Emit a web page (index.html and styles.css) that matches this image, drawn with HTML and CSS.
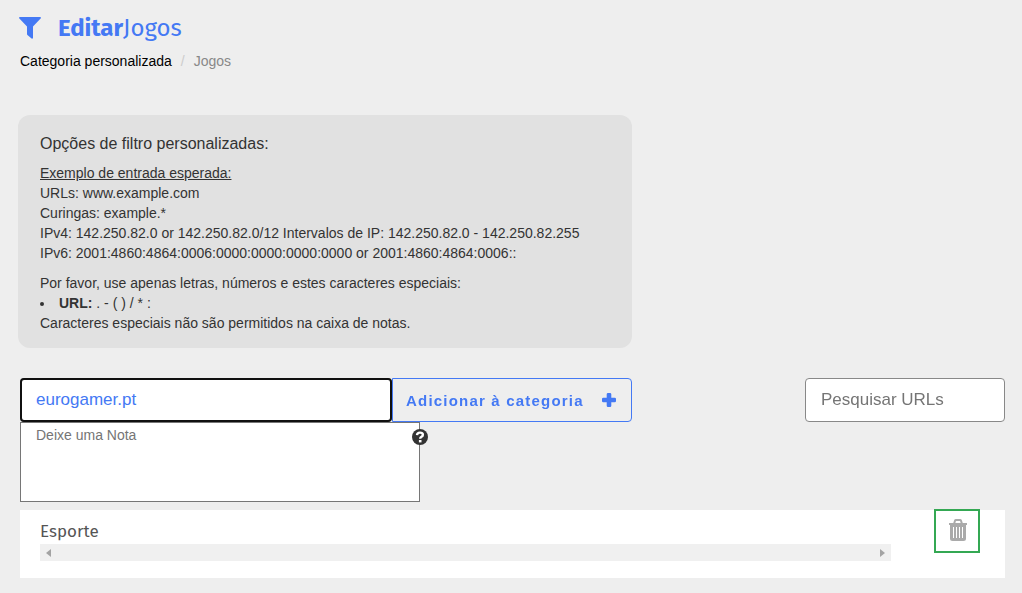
FILE: index.html
```html
<!DOCTYPE html>
<html lang="pt">
    <head>
        <meta charset="UTF-8">
        <title>Editar Jogos</title>
        <meta name="viewport" content="width=device-width, initial-scale=1.0">
        <link rel="stylesheet" href="styles.css">
    </head>
    <body>
        <header class="page-header">
            <h1 class="page-title">
                <svg class="filter-icon" viewBox="0 0 22 22" aria-hidden="true">
                    <path d="M0.6 0H21.4Q22.4 0.8 21.6 1.6L14 9.6V21Q13.6 22 12.6 21.6L8.4 18Q8 17.6 8 17V9.6L0.4 1.6Q-0.4 0.8 0.6 0Z"/>
                </svg>
                <span><strong>Editar</strong>Jogos</span>
            </h1>
            <nav class="breadcrumb">
                <a href="#">Categoria personalizada</a>
                <span class="separator">/</span>
                <span>Jogos</span>
            </nav>
        </header>

        <main>
            <section class="info-box">
                <h2>Opções de filtro personalizadas:</h2>
                <p>
                    <u>Exemplo de entrada esperada:</u><br>
                    URLs: www.example.com<br>
                    Curingas: example.*<br>
                    IPv4: 142.250.82.0 or 142.250.82.0/12 Intervalos de IP: 142.250.82.0 - 142.250.82.255<br>
                    IPv6: 2001:4860:4864:0006:0000:0000:0000:0000 or 2001:4860:4864:0006::
                </p>
                <p>Por favor, use apenas letras, números e estes caracteres especiais:</p>
                <ul>
                    <li><strong>URL:</strong> . - ( ) / * :</li>
                </ul>
                <p>Caracteres especiais não são permitidos na caixa de notas.</p>
            </section>

            <form class="toolbar">
                <div class="add-row">
                    <input class="url-input" id="urlInput" type="text" value="eurogamer.pt" aria-label="URL" autocomplete="off" spellcheck="false" autofocus>
                    <button class="add-btn" type="button">
                        Adicionar à categoria
                        <svg class="plus-icon" viewBox="0 0 14 14" aria-hidden="true">
                            <path d="M6 0H8Q9.3 0 9.3 1.3V4.7H12.7Q14 4.7 14 6V8Q14 9.3 12.7 9.3H9.3V12.7Q9.3 14 8 14H6Q4.7 14 4.7 12.7V9.3H1.3Q0 9.3 0 8V6Q0 4.7 1.3 4.7H4.7V1.3Q4.7 0 6 0Z"/>
                        </svg>
                    </button>
                </div>
                <input class="search-input" type="search" placeholder="Pesquisar URLs" aria-label="Pesquisar URLs">
            </form>

            <div class="note">
                <textarea class="note-input" placeholder="Deixe uma Nota" aria-label="Nota"></textarea>
                <svg class="help-icon" viewBox="0 0 16 16" role="img" aria-label="Ajuda">
                    <circle cx="8" cy="8" r="8" fill="#333"/>
                    <path d="M5 6.2Q5.2 3.6 8 3.6Q10.9 3.6 10.9 5.8Q10.9 7.2 9.3 7.9Q8.2 8.4 8.2 9.8" fill="none" stroke="#fff" stroke-width="2.4"/>
                    <rect x="6.900" y="11" width="2.600" height="2.400" fill="#fff"/>
                </svg>
            </div>

            <section class="entry">
                <div class="entry-body">
                    <h3>Esporte</h3>
                    <div class="scroll-track">
                        <svg viewBox="0 0 5 8" aria-hidden="true"><path d="M5 0V8L0 4Z"/></svg>
                        <svg viewBox="0 0 5 8" aria-hidden="true"><path d="M0 0V8L5 4Z"/></svg>
                    </div>
                </div>
                <button class="delete-btn" type="button" aria-label="Remover">
                    <svg class="trash-icon" viewBox="0 0 20 22" aria-hidden="true">
                        <path d="M6 5L7 1.700Q7.200 1 8 1H12Q12.800 1 13 1.700L14 5" fill="none" stroke="#aaa" stroke-width="2"/>
                        <path d="M1 4H19V6H18V19.500Q18 22 15.500 22H4.500Q2 22 2 19.500V6H1Z" fill="#aaa"/>
                        <path d="M5.500 8V19M8.500 8V19M11.500 8V19M14.500 8V19" stroke="#fff" stroke-width="1"/>
                    </svg>
                </button>
            </section>
        </main>

        <script>
            // keep the cursor after the typed address
            const urlInput = document.getElementById('urlInput');
            urlInput.focus();
            urlInput.setSelectionRange(urlInput.value.length, urlInput.value.length);
        </script>
    </body>
</html>
```
FILE: styles.css
```css
* {
    box-sizing: border-box;
}
body {
    margin: 0;
    padding: 12px 17px 15px 19px;
    background-color: #eee;
    color: #333;
    font-family: Arial, "Liberation Sans", sans-serif;
    font-size: 14px;
    line-height: 20px;
}
h1, h2, h3, p, ul {
    margin: 0;
    padding: 0;
    font-weight: 400;
}
input, textarea, button {
    margin: 0;
    font-family: inherit;
}
main {
    padding-left: 1px;
}
.page-header {
    margin-bottom: 44px;
}
.page-title {
    display: flex;
    align-items: center;
    gap: 17px;
    height: 31px;
    margin-bottom: 8px;
    color: #4479f4;
    font-family: "Fira Sans", "Noto Sans", sans-serif;
    font-size: 24px;
    line-height: 30px;
}
.filter-icon {
    width: 22px;
    height: 22px;
    fill: #4479f4;
}
.breadcrumb {
    display: flex;
    gap: 9px;
    padding-left: 1px;
    color: #888;
}
.breadcrumb a {
    color: #000;
    text-decoration: none;
}
.separator {
    color: #ccc;
}
.info-box {
    max-width: 614px;
    margin: 0 0 30px -2px;
    padding: 19px 22px 15px;
    border-radius: 12px;
    background-color: #e1e1e1;
}
.info-box h2 {
    margin-bottom: 9px;
    font-size: 16px;
    line-height: 20px;
}
.info-box h2 + p {
    margin-bottom: 10px;
}
.info-box ul {
    list-style-position: inside;
}
.toolbar {
    display: flex;
    justify-content: space-between;
    gap: 20px;
}
.add-row {
    display: flex;
    flex: 0 1 612px;
}
.url-input, .search-input {
    height: 44px;
    padding: 0 15px;
    border: 1px solid #888;
    border-radius: 4px;
    background-color: #fff;
    font-size: 17px;
}
.url-input {
    flex: 1;
    min-width: 0;
    color: #4479f4;
}
.url-input:focus {
    outline: 2px solid #101010;
    outline-offset: -2px;
}
.add-btn {
    display: flex;
    align-items: center;
    justify-content: space-between;
    width: 240px;
    height: 44px;
    padding: 0 15px 0 13px;
    border: 1px solid #4479f4;
    border-radius: 0 4px 4px 0;
    background-color: transparent;
    color: #4479f4;
    font-size: 15px;
    font-weight: bold;
    letter-spacing: 0.08em;
    white-space: nowrap;
    cursor: pointer;
}
.plus-icon {
    width: 14px;
    height: 14px;
    fill: #4479f4;
}
.search-input {
    width: 200px;
    appearance: none;
}
.search-input::placeholder, .note-input::placeholder {
    color: #757575;
}
.note {
    position: relative;
    max-width: 400px;
    margin-bottom: 8px;
}
.note-input {
    display: block;
    width: 100%;
    height: 80px;
    padding: 4px 15px;
    border: 1px solid #767676;
    border-radius: 0;
    background-color: #fff;
    font-size: 14px;
    line-height: 16px;
    resize: none;
}
.help-icon {
    position: absolute;
    top: 7px;
    right: -8px;
    width: 16px;
    height: 16px;
}
.entry {
    display: flex;
    align-items: flex-start;
    gap: 45px;
    padding: 1px 27px 17px 20px;
    background-color: #fff;
}
.entry-body {
    flex: 1;
    padding-top: 10px;
}
.entry h3 {
    margin-bottom: 1px;
    color: #555;
    font-family: "Fira Sans", "Noto Sans", sans-serif;
    font-size: 17px;
    line-height: 22px;
}
.scroll-track {
    display: flex;
    align-items: center;
    justify-content: space-between;
    height: 17px;
    padding: 0 6px;
    background-color: #f0f0f0;
}
.scroll-track svg {
    width: 5px;
    height: 8px;
    fill: #a3a3a3;
}
.delete-btn {
    display: flex;
    align-items: center;
    justify-content: center;
    width: 42px;
    height: 40px;
    padding: 0 0 2px 2px;
    border: none;
    outline: 2px solid #34a853;
    background-color: #fff;
    cursor: pointer;
}
.trash-icon {
    width: 20px;
    height: 22px;
}
```
